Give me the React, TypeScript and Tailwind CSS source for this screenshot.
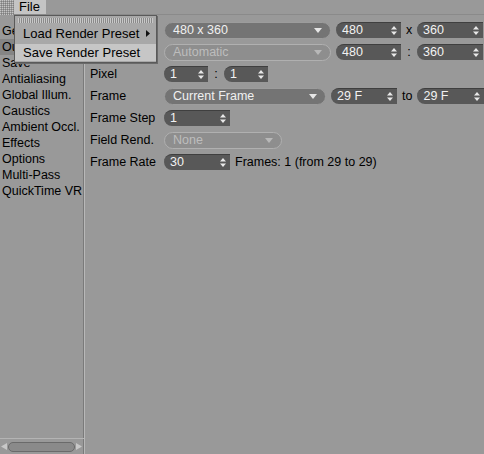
import React from 'react'

const font = { fontFamily: '"Liberation Sans", Arial, sans-serif' }

function Spin() {
  return (
    <svg width="6" height="9" viewBox="0 0 6 9" className="shrink-0">
      <path d="M3 0 L6 3.5 L0 3.5 Z" fill="#e8e8e8" />
      <path d="M0 5.5 L6 5.5 L3 9 Z" fill="#e8e8e8" />
    </svg>
  )
}

function Field({ value, w }: { value: string; w: string }) {
  return (
    <div
      className={`flex h-[16px] ${w} shrink-0 items-center justify-between rounded-l-full rounded-r-[2px] border-t border-[#3f3f3f] border-b-[#7a7a7a] bg-[#585858] pl-[6px] pr-[4px] text-[12.5px] leading-none text-[#f2f2f2]`}
    >
      <span>{value}</span>
      <Spin />
    </div>
  )
}

function Drop({ value, w, disabled }: { value: string; w: string; disabled?: boolean }) {
  return (
    <div
      className={`flex h-[17px] ${w} shrink-0 items-center justify-between rounded-full border px-[8px] text-[12.5px] leading-none ${
        disabled
          ? 'border-[#b0b0b0] bg-[#8e8e8e] text-[#bdbdbd]'
          : 'border-[#9c9c9c] bg-[#747474] text-[#f0f0f0]'
      }`}
    >
      <span>{value}</span>
      <svg width="8" height="5" viewBox="0 0 8 5">
        <path d="M0 0 L8 0 L4 5 Z" fill={disabled ? '#b8b8b8' : '#e6e6e6'} />
      </svg>
    </div>
  )
}

function Row({ label, children }: { label: string; children?: React.ReactNode }) {
  return (
    <div className="flex h-[22px] items-center">
      <div className="w-[74px] shrink-0 whitespace-nowrap text-[12.5px] text-black">{label}</div>
      <div className="flex items-center gap-[5px]">{children}</div>
    </div>
  )
}

function Sep({ c }: { c: string }) {
  return <span className="w-[6px] text-center text-[12.5px] text-black">{c}</span>
}

const navItems = [
  'General',
  'Output',
  'Save',
  'Antialiasing',
  'Global Illum.',
  'Caustics',
  'Ambient Occl.',
  'Effects',
  'Options',
  'Multi-Pass',
  'QuickTime VR',
]

export default function App() {
  return (
    <div className="relative h-[454px] w-[484px] overflow-hidden bg-[#999999]" style={font}>
      {/* menubar */}
      <div className="flex h-[15px] items-stretch border-b border-[#8a8a8a]">
        <svg width="14" height="15" className="shrink-0">
          <defs>
            <pattern id="grip" width="2" height="2" patternUnits="userSpaceOnUse">
              <rect width="1" height="1" fill="#c4c4c4" />
              <rect x="1" y="1" width="1" height="1" fill="#7e7e7e" />
            </pattern>
          </defs>
          <rect width="14" height="15" fill="url(#grip)" />
        </svg>
        <div className="flex w-[32px] items-center bg-[#c4c4c4] pl-[5px] text-[13px] text-black">File</div>
      </div>

      <div className="flex h-[439px]">
        {/* sidebar */}
        <div className="relative flex w-[85px] shrink-0 flex-col border-r border-r-[#b8b8b8]">
          <div className="flex flex-1 flex-col border-r border-r-[#7a7a7a] pt-[8px]">
            {navItems.map((n) => (
              <div
                key={n}
                className={`h-[16px] whitespace-nowrap pl-[2px] text-[12.5px] leading-[16px] text-black ${
                  n === 'Output' ? 'bg-[#858585]' : ''
                }`}
              >
                {n}
              </div>
            ))}
          </div>
          <div className="border-t border-[#b4b4b4]" />
          <div className="flex h-[15px] items-center gap-[1px] border-r border-r-[#7a7a7a] px-[1px]">
            <svg width="6" height="7" viewBox="0 0 6 7">
              <path d="M0 3.5 L6 0 L6 7 Z" fill="#c8c8c8" />
            </svg>
            <div className="h-[10px] flex-1 rounded-full border border-[#6a6a6a] bg-[#8a8a8a]" />
            <svg width="6" height="7" viewBox="0 0 6 7">
              <path d="M6 3.5 L0 0 L0 7 Z" fill="#c8c8c8" />
            </svg>
          </div>
        </div>

        {/* settings */}
        <div className="flex flex-1 flex-col pl-[5px] pt-[4px]">
          <Row label="Resolution">
            <Drop value="480 x 360" w="w-[167px]" />
            <Field value="480" w="w-[65px]" />
            <Sep c="x" />
            <Field value="360" w="w-[66px]" />
          </Row>
          <Row label="Film Format">
            <Drop value="Automatic" w="w-[167px]" disabled />
            <Field value="480" w="w-[65px]" />
            <Sep c=":" />
            <Field value="360" w="w-[66px]" />
          </Row>
          <Row label="Pixel">
            <Field value="1" w="w-[44px]" />
            <Sep c=":" />
            <Field value="1" w="w-[44px]" />
          </Row>
          <Row label="Frame">
            <Drop value="Current Frame" w="w-[162px]" />
            <Field value="29 F" w="w-[66px]" />
            <span className="text-[12.5px] text-black">to</span>
            <Field value="29 F" w="w-[67px]" />
          </Row>
          <Row label="Frame Step">
            <Field value="1" w="w-[66px]" />
          </Row>
          <Row label="Field Rend.">
            <Drop value="None" w="w-[118px]" disabled />
          </Row>
          <Row label="Frame Rate">
            <Field value="30" w="w-[66px]" />
            <span className="whitespace-nowrap text-[12.5px] text-black">Frames: 1 (from 29 to 29)</span>
          </Row>
        </div>
      </div>

      {/* File menu */}
      <div className="absolute left-[14px] top-[15px] w-[143px] border border-[#5a5a5a] bg-[#a8a8a8] shadow-[1px_1px_0_#6a6a6a]">
        <div className="mx-[3px] mt-[2px] h-[5px] bg-[repeating-linear-gradient(90deg,#c8c8c8_0_1px,#8a8a8a_1px_2px)]" />
        <div className="flex h-[21px] items-center justify-between pl-[8px] pr-[6px] text-[13px] text-black">
          <span>Load Render Preset</span>
          <svg width="4" height="7" viewBox="0 0 4 7">
            <path d="M0 0 L4 3.5 L0 7 Z" fill="#111" />
          </svg>
        </div>
        <div className="mb-[1px] flex h-[17px] items-center bg-[#c6c6c6] pl-[8px] text-[13px] text-black">
          Save Render Preset
        </div>
      </div>
    </div>
  )
}
